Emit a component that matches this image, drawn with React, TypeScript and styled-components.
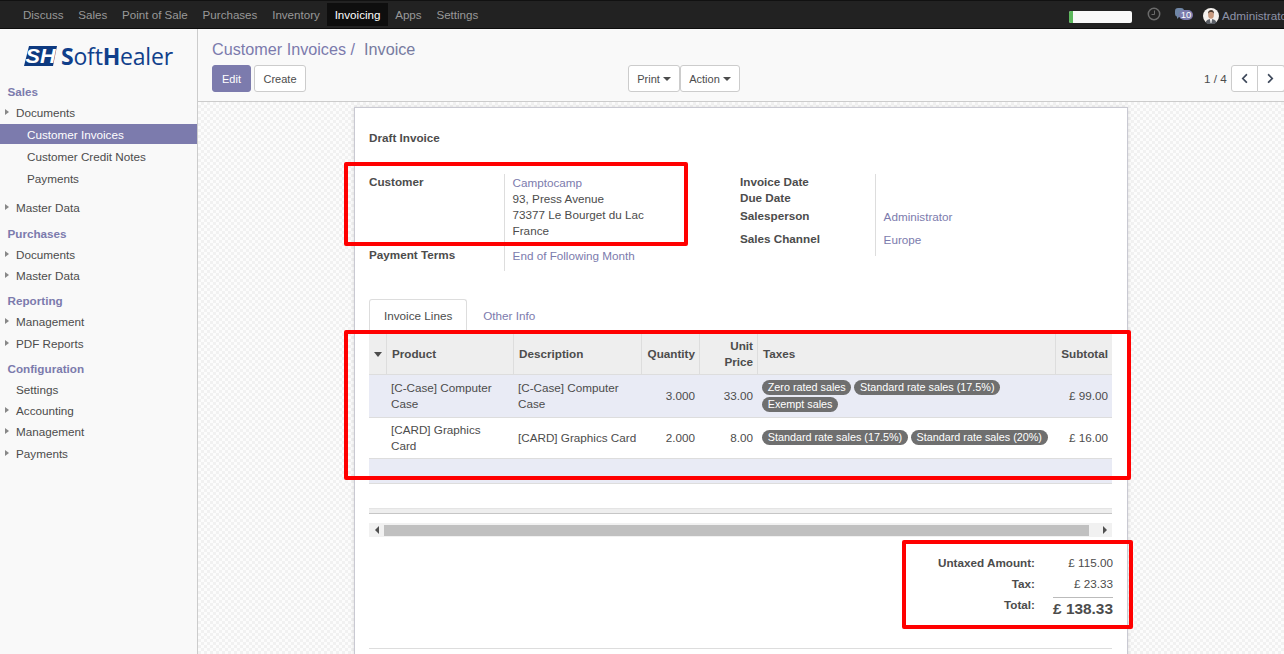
import React from "react";
import styled, { createGlobalStyle } from "styled-components";
import { FaChevronLeft, FaChevronRight } from "react-icons/fa";

const Global = createGlobalStyle`
  *, *::before, *::after { box-sizing: border-box; }
  html, body { margin: 0; height: 654px; overflow: hidden; }
  body { font-family: "Liberation Sans", Arial, sans-serif; font-size: 11.7px; line-height: 16px; color: #4c4c4c; background: #f9f9f9; }
`;

const Page = styled.div`position: relative; width: 1284px; height: 654px; overflow: hidden; display: flex; flex-direction: column;`;

const TopBar = styled.header`
  flex: none; height: 29px; display: flex; background: #222; border-top: 1px solid #111; border-bottom: 1px solid #0d0d0d;
  padding: 2px 0 0 15.500px; overflow: hidden;
`;
const NavItem = styled.a<{ $active?: boolean }>`
  height: 23px; padding: 0 7.4px; line-height: 23px; font-size: 11.6px; white-space: nowrap;
  color: ${p => (p.$active ? "#fff" : "#999")}; background: ${p => (p.$active ? "#0e0e0e" : "transparent")};
`;
const TopRight = styled.div`margin-left: auto; width: 215px; flex: none; display: flex; align-items: center; height: 23px; white-space: nowrap;`;
const Progress = styled.div`flex: none; width: 63px; height: 12px; margin-top: 4px; border-radius: 2px; background: #f9f9f9; overflow: hidden;`;
const ProgressFill = styled.div`height: 100%; background: #5cb85c;`;
const ClockWrap = styled.span`flex: none; display: flex; margin: -1px 0 0 15px;`;
const ChatWrap = styled.span`flex: none; position: relative; width: 20px; height: 14px; margin: 0 0 0 13px;`;
const Badge = styled.span`
  position: absolute; left: 5px; top: 2px; width: 14px; height: 10px; border-radius: 5px; background: #7c7bad; color: #fff;
  font-size: 9.5px; line-height: 10px; text-align: center;
`;
const AvatarWrap = styled.span`flex: none; display: flex; margin: 3px 0 0 9px;`;
const UserName = styled.span`flex: none; margin: 3px 0 0 3px; color: #8d93a8; font-size: 11.7px;`;

const Main = styled.div`flex: 1; display: flex; min-height: 0;`;
const Sidebar = styled.aside`flex: none; width: 198px; border-right: 1px solid #ccc; background: #f9f9f9; overflow: hidden;`;
const LogoRow = styled.div`height: 52px; display: flex; align-items: center; padding: 2px 0 0 24px; gap: 4px;`;
const LogoText = styled.span`color: #103f8b; font-family: "Open Sans", sans-serif; font-size: 23px; line-height: 26px; letter-spacing: -0.2px; white-space: nowrap;`;
const LogoBold = styled.b`font-weight: 700;`;
const MenuGroup = styled.section`margin-bottom: 5.500px;`;
const Heading = styled.div`height: 21px; line-height: 22px; padding-left: 7.500px; font-weight: 700; color: #7c7bad; font-size: 11.7px;`;
const Arrow = styled.i`
  position: absolute; left: 5px; top: 7px; width: 0; height: 0;
  border-left: 4px solid #888; border-top: 3.5px solid transparent; border-bottom: 3.5px solid transparent;
`;
const Item = styled.a<{ $sub?: boolean; $active?: boolean; $gap?: number }>`
  position: relative; display: block; height: 20px; line-height: 22px; white-space: nowrap;
  padding-left: ${p => (p.$sub ? 27 : 16)}px;
  margin-top: ${p => p.$gap ?? 0}px; margin-bottom: ${p => (p.$sub ? 2 : 1.2)}px;
  color: ${p => (p.$active ? "#fff" : "#4c4c4c")}; background: ${p => (p.$active ? "#7c7bad" : "transparent")};
`;

const Content = styled.main`flex: 1; min-width: 0; display: flex; flex-direction: column;`;
const ControlPanel = styled.div`flex: none; height: 73px; background: #f9f9f9; border-bottom: 1px solid #ccc; padding: 10px 0 0 14px;`;
const Crumbs = styled.div`height: 20px; line-height: 20px; margin-bottom: 6px; font-size: 16.2px; color: #7c7bad; white-space: pre;`;
const CrumbCurrent = styled.span`color: #777ba0;`;
const Controls = styled.div`display: grid; grid-template-columns: 416px 1fr auto;`;
const BtnRow = styled.div`display: flex; gap: 3px;`;
const Joined = styled.div`display: flex;`;
const Btn = styled.button<{ $primary?: boolean; $w: number }>`
  height: 27px; width: ${p => p.$w}px; padding: 0; border-radius: 3px; font: inherit; font-size: 11px;
  display: inline-flex; align-items: center; justify-content: center; gap: 3px;
  color: ${p => (p.$primary ? "#fff" : "#4c4c4c")}; background: ${p => (p.$primary ? "#7c7bad" : "#fff")};
  border: 1px solid ${p => (p.$primary ? "#7c7bad" : "#ccc")};
`;
const Caret = styled.i`width: 0; height: 0; border-top: 4px solid #4c4c4c; border-left: 4px solid transparent; border-right: 4px solid transparent;`;
const Pager = styled.div`display: flex; align-items: center; width: 80px; overflow: hidden; justify-content: flex-start; white-space: nowrap;`;
const PagerText = styled.span`margin-right: 4px; color: #4c4c4c;`;
const PagerBtn = styled.button`
  flex: none; width: 27px; height: 27px; padding: 0; background: #fff; border: 1px solid #ccc; border-radius: 3px 0 0 3px;
  display: flex; align-items: center; justify-content: center; color: #3f4a5c; & + & { border-left: 0; border-radius: 0 3px 3px 0; }
`;

const Board = styled.div`
  flex: 1; min-height: 0; overflow: hidden; padding: 5px 0 0 156px;
  background: repeating-conic-gradient(#f1f1f1 0 25%, #fcfcfc 0 50%) 0 0 / 6px 6px;
`;
const Sheet = styled.article`
  width: 774px; height: 620px; background: #fff; border: 1px solid #c9c9d2; box-shadow: 0 0 4px rgba(0,0,0,.12);
  padding: 22px 15px 0 14px;
`;
const Title = styled.div`font-weight: 700; height: 16px;`;
const FormGroups = styled.div`display: flex; margin-top: 28px;`;
const FormCol = styled.div`width: 371px; flex: none;`;
const Field = styled.div`display: grid; grid-template-columns: 135px 1fr;`;
const Label = styled.div`font-weight: 700;`;
const Value = styled.div<{ $pb: number }>`border-left: 1px solid #ddd; padding: 1px 0 ${p => p.$pb}px 7.600px;`;
const Link = styled.a`color: #7c7bad; display: block;`;

const TabBar = styled.div`display: flex; margin-top: 28px; height: 33px; border-bottom: 1px solid #ddd;`;
const Tab = styled.a<{ $active?: boolean }>`
  height: 33px; line-height: 32px; padding: 0 14px; margin-right: 1px; white-space: nowrap;
  color: ${p => (p.$active ? "#4c4c4c" : "#7c7bad")}; background: ${p => (p.$active ? "#fff" : "transparent")};
  border: 1px solid ${p => (p.$active ? "#ddd" : "transparent")}; border-bottom: 0; border-radius: 3px 3px 0 0;
`;
const Lines = styled.table`width: 743px; margin-top: 2px; table-layout: fixed; border-collapse: separate; border-spacing: 0;`;
const Th = styled.th<{ $right?: boolean }>`
  height: 41px; padding: 0 4px 0 5px; background: #eee; border-right: 1px solid #ddd; border-bottom: 1px solid #ddd;
  font-weight: 700; text-align: ${p => (p.$right ? "right" : "left")}; &:last-child { border-right: 0; }
`;
const SortCaret = styled.i`display: block; width: 0; height: 0; margin-left: 0; border-top: 5px solid #4c4c4c; border-left: 4.5px solid transparent; border-right: 4.5px solid transparent;`;
const Row = styled.tr<{ $shade?: boolean }>`background: ${p => (p.$shade ? "#e9ebf5" : "#fff")};`;
const Td = styled.td<{ $right?: boolean; $wide?: boolean; $h: number }>`
  height: ${p => p.$h}px; padding: 0 ${p => (p.$wide ? 3 : 6)}px 0 4px; border-bottom: 1px solid #ddd; text-align: ${p => (p.$right ? "right" : "left")};
  ${p => (p.$right ? "padding-right: 5px; &:last-child { padding-right: 4px; }" : "")}
`;
const FootCell = styled.td`height: 25px; padding: 0; background: #e9ebf5; border-bottom: 1px solid #ddd;`;
const Tags = styled.div<{ $nudge?: boolean }>`display: flex; flex-wrap: wrap; gap: 2px 3px; margin-top: ${p => (p.$nudge ? -2 : 0)}px;`;
const TagChip = styled.span`
  height: 15px; line-height: 15px; padding: 0 5.7px; border-radius: 8px; background: #6f6f6f; color: #fff; font-size: 10.8px; white-space: nowrap;
`;
const Band = styled.div`height: 6px; margin-top: 24px; width: 743px; background: #eee; border-top: 1px solid #e4e4e4; border-bottom: 1px solid #c6c6c6;`;
const ScrollBar = styled.div`height: 14px; width: 743px; margin-top: 9px; display: flex; align-items: stretch; background: #f1f1f1;`;
const ScrollBtn = styled.span`flex: none; width: 15px; display: flex; align-items: center; justify-content: center;`;
const ScrollLeft = styled.i`border-right: 4px solid #505050; border-top: 4px solid transparent; border-bottom: 4px solid transparent;`;
const ScrollRight = styled.i`border-left: 4px solid #505050; border-top: 4px solid transparent; border-bottom: 4px solid transparent;`;
const Thumb = styled.div`flex: none; width: 705px; margin: 2px 0 1px; background: #c0c0c0;`;
const ScrollEnd = styled.div`flex: 1; display: flex; justify-content: flex-end;`;
const Totals = styled.div`display: grid; grid-template-columns: auto 78px; justify-content: end; row-gap: 5px; margin: 18px -1px 0 0;`;
const TotalLabel = styled.div`font-weight: 700; text-align: right;`;
const TotalValue = styled.div`text-align: right;`;
const GrandValue = styled.div`
  justify-self: end; width: 60px; border-top: 1px solid #bbb; padding-top: 2px; line-height: 18px;
  font-size: 15.4px; font-weight: 700; text-align: right; white-space: nowrap;
`;
const Divider = styled.hr`width: 743px; margin: 30px 0 0; border: 0; border-top: 1px solid #ddd;`;

const Annotation = styled.div<{ $x: number; $y: number; $w: number; $h: number }>`
  position: absolute; left: ${p => p.$x}px; top: ${p => p.$y}px; width: ${p => p.$w}px; height: ${p => p.$h}px;
  border: 4px solid #ff0000; border-radius: 2px; pointer-events: none;
`;

const Avatar = () => (
  <svg width="16" height="16" viewBox="0 0 16 16">
    <circle cx="8" cy="8" r="8" fill="#f4f1ee" />
    <path d="M2.5 14.5C3.5 11.8 5.5 11 8 11s4.5.8 5.5 3.5A8 8 0 0 1 2.5 14.5z" fill="#5b5f66" />
    <path d="M7 11h2l-.6 4h-.8z" fill="#fff" />
    <ellipse cx="8" cy="6.8" rx="2.9" ry="3.9" fill="#c99a7f" />
    <path d="M5 6c-.2-3 1.4-4 3.2-4S11.200 3.200 11 6c-.5-1.500-1.500-2-3-2s-2.500.5-3 2z" fill="#4a3a30" />
  </svg>
);

const SH = () => (
  <svg width="33" height="20" viewBox="0 0 33 20">
    <path d="M5 0H33L29 20H0z" fill="#0e3a80" />
    <text x="1.500" y="16.500" fontFamily="Liberation Sans" fontSize="20" fontWeight="700" fontStyle="italic" fill="#fff" textLength="30" lengthAdjust="spacingAndGlyphs">SH</text>
  </svg>
);

const Clock = () => (
  <svg width="14" height="14" viewBox="0 0 14 14" fill="none" stroke="#6b6b6b" strokeWidth="1.500">
    <circle cx="7" cy="7" r="5.700" />
    <path d="M7.500 3.500V7.500H4.500" strokeWidth="1" />
  </svg>
);

const Bubble = () => (
  <svg width="10" height="12" viewBox="0 0 10 12">
    <path d="M4 0h3a3 3 0 0 1 3 3v3a3 3 0 0 1-3 3H5L3 11V8.700A3 3 0 0 1 1 6V3a3 3 0 0 1 3-3z" fill="#6f86a6" />
  </svg>
);

const nav = ["Discuss", "Sales", "Point of Sale", "Purchases", "Inventory", "Invoicing", "Apps", "Settings"];

const tag = (list: string[], nudge?: boolean) => (
  <Tags $nudge={nudge}>{list.map(t => <TagChip key={t}>{t}</TagChip>)}</Tags>
);

export default function App() {
  return (
    <Page>
      <Global />
      <TopBar>
        {nav.map(n => <NavItem key={n} $active={n === "Invoicing"}>{n}</NavItem>)}
        <TopRight>
          <Progress><ProgressFill style={{ width: "6%" }} /></Progress>
          <ClockWrap><Clock /></ClockWrap>
          <ChatWrap><Bubble /><Badge>10</Badge></ChatWrap>
          <AvatarWrap><Avatar /></AvatarWrap>
          <UserName>Administrator</UserName>
        </TopRight>
      </TopBar>
      <Main>
        <Sidebar>
          <LogoRow>
            <SH />
            <LogoText><LogoBold>S</LogoBold>oft<LogoBold>H</LogoBold>ealer</LogoText>
          </LogoRow>
          <MenuGroup>
            <Heading>Sales</Heading>
            <Item><Arrow />Documents</Item>
            <Item $sub $active $gap={1.6}>Customer Invoices</Item>
            <Item $sub>Customer Credit Notes</Item>
            <Item $sub>Payments</Item>
            <Item $gap={9.6}><Arrow />Master Data</Item>
          </MenuGroup>
          <MenuGroup>
            <Heading>Purchases</Heading>
            <Item><Arrow />Documents</Item>
            <Item><Arrow />Master Data</Item>
          </MenuGroup>
          <MenuGroup>
            <Heading>Reporting</Heading>
            <Item><Arrow />Management</Item>
            <Item><Arrow />PDF Reports</Item>
          </MenuGroup>
          <MenuGroup>
            <Heading>Configuration</Heading>
            <Item>Settings</Item>
            <Item><Arrow />Accounting</Item>
            <Item><Arrow />Management</Item>
            <Item><Arrow />Payments</Item>
          </MenuGroup>
        </Sidebar>
        <Content>
          <ControlPanel>
            <Crumbs>Customer Invoices /  <CrumbCurrent>Invoice</CrumbCurrent></Crumbs>
            <Controls>
              <BtnRow>
                <Btn $primary $w={39}>Edit</Btn>
                <Btn $w={52}>Create</Btn>
              </BtnRow>
              <Joined>
                <Btn $w={52}>Print <Caret /></Btn>
                <Btn $w={60}>Action <Caret /></Btn>
              </Joined>
              <Pager>
                <PagerText>1 / 4</PagerText>
                <PagerBtn><FaChevronLeft size={11} /></PagerBtn>
                <PagerBtn><FaChevronRight size={11} /></PagerBtn>
              </Pager>
            </Controls>
          </ControlPanel>
          <Board>
            <Sheet>
              <Title>Draft Invoice</Title>
              <FormGroups>
                <FormCol>
                  <Field>
                    <Label>Customer</Label>
                    <Value $pb={8}>
                      <Link>Camptocamp</Link>
                      93, Press Avenue<br />73377 Le Bourget du Lac<br />France
                    </Value>
                  </Field>
                  <Field>
                    <Label>Payment Terms</Label>
                    <Value $pb={7}><Link>End of Following Month</Link></Value>
                  </Field>
                </FormCol>
                <FormCol>
                  <Field><Label>Invoice Date</Label><Value $pb={0} /></Field>
                  <Field><Label>Due Date</Label><Value $pb={17} /></Field>
                  <Field><Label>Salesperson</Label><Value $pb={6}><Link>Administrator</Link></Value></Field>
                  <Field><Label>Sales Channel</Label><Value $pb={8}><Link>Europe</Link></Value></Field>
                </FormCol>
              </FormGroups>
              <TabBar>
                <Tab $active>Invoice Lines</Tab>
                <Tab>Other Info</Tab>
              </TabBar>
              <Lines>
                <colgroup>
                  <col width="18" /><col width="127" /><col width="128" /><col width="58" />
                  <col width="58" /><col width="298" /><col width="56" />
                </colgroup>
                <thead>
                  <tr>
                    <Th><SortCaret /></Th>
                    <Th>Product</Th>
                    <Th>Description</Th>
                    <Th $right>Quantity</Th>
                    <Th $right>Unit Price</Th>
                    <Th>Taxes</Th>
                    <Th $right>Subtotal</Th>
                  </tr>
                </thead>
                <tbody>
                  <Row $shade>
                    <Td $h={43} />
                    <Td $h={43}>[C-Case] Computer Case</Td>
                    <Td $h={43}>[C-Case] Computer Case</Td>
                    <Td $h={43} $right>3.000</Td>
                    <Td $h={43} $right>33.00</Td>
                    <Td $h={43}>{tag(["Zero rated sales", "Standard rate sales (17.5%)", "Exempt sales"])}</Td>
                    <Td $h={43} $right>£ 99.00</Td>
                  </Row>
                  <Row>
                    <Td $h={41} />
                    <Td $h={41}>[CARD] Graphics Card</Td>
                    <Td $h={41} $wide>[CARD] Graphics Card</Td>
                    <Td $h={41} $right>2.000</Td>
                    <Td $h={41} $right>8.00</Td>
                    <Td $h={41}>{tag(["Standard rate sales (17.5%)", "Standard rate sales (20%)"], true)}</Td>
                    <Td $h={41} $right>£ 16.00</Td>
                  </Row>
                  <tr><FootCell colSpan={7} /></tr>
                </tbody>
              </Lines>
              <Band />
              <ScrollBar>
                <ScrollBtn><ScrollLeft /></ScrollBtn>
                <Thumb />
                <ScrollEnd><ScrollBtn><ScrollRight /></ScrollBtn></ScrollEnd>
              </ScrollBar>
              <Totals>
                <TotalLabel>Untaxed Amount:</TotalLabel><TotalValue>£ 115.00</TotalValue>
                <TotalLabel>Tax:</TotalLabel><TotalValue>£ 23.33</TotalValue>
                <TotalLabel>Total:</TotalLabel><GrandValue>£ 138.33</GrandValue>
              </Totals>
              <Divider />
            </Sheet>
          </Board>
        </Content>
      </Main>
      <Annotation $x={344} $y={162} $w={344} $h={84} />
      <Annotation $x={344} $y={330} $w={787} $h={150} />
      <Annotation $x={902} $y={540} $w={231} $h={89} />
    </Page>
  );
}
